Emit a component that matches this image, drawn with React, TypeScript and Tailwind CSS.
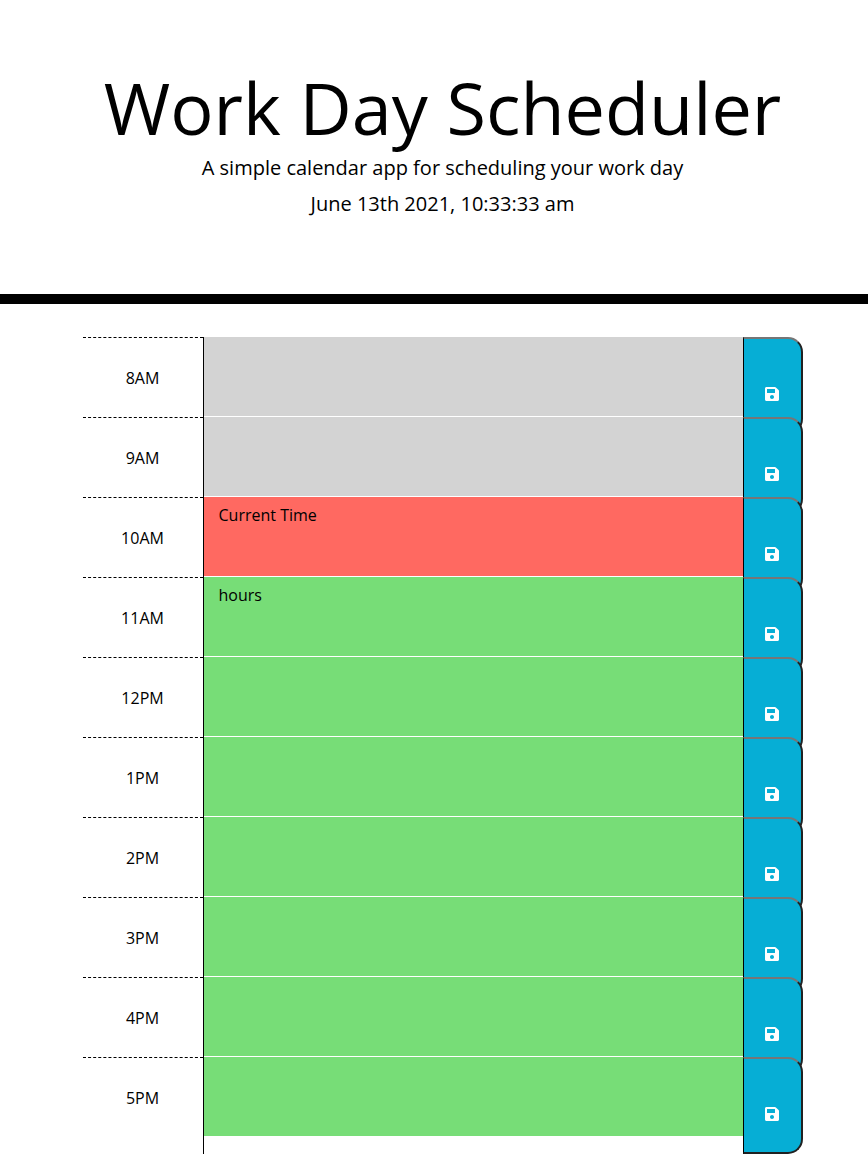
import { FaSave } from "react-icons/fa";

type Status = "past" | "present" | "future";

const blocks: { hour: string; status: Status; text: string }[] = [
  { hour: "8AM", status: "past", text: "" },
  { hour: "9AM", status: "past", text: "" },
  { hour: "10AM", status: "present", text: "Current Time" },
  { hour: "11AM", status: "future", text: "hours" },
  { hour: "12PM", status: "future", text: "" },
  { hour: "1PM", status: "future", text: "" },
  { hour: "2PM", status: "future", text: "" },
  { hour: "3PM", status: "future", text: "" },
  { hour: "4PM", status: "future", text: "" },
  { hour: "5PM", status: "future", text: "" },
];

const statusColor: Record<Status, string> = {
  past: "bg-[#d3d3d3]",
  present: "bg-[#ff6961]",
  future: "bg-[#77dd77]",
};

function TimeBlock({ hour, status, text }: { hour: string; status: Status; text: string }) {
  return (
    <div className="flex h-20 w-[720px]">
      <div className="w-[120px] border-t border-dashed border-black pt-7 pr-px text-center text-base leading-6">
        {hour}
      </div>
      <div className="h-[97px] w-[541px] shrink-0 border-x border-black">
        <div className={`h-[79px] px-[14.5px] pt-1.5 text-base leading-6 text-black ${statusColor[status]}`}>
          {text}
        </div>
      </div>
      <button
        aria-label={`Save ${hour}`}
        className="relative -ml-px flex h-[97px] w-[60px] shrink-0 justify-center rounded-r-[15px] border-2 border-l border-t-[#767676] border-r-[#212121] border-b-[#212121] border-l-black bg-[#06aed5] pt-[47px] pr-[1px] text-white"
      >
        <FaSave className="h-4 w-3.5" />
      </button>
    </div>
  );
}

export default function App() {
  return (
    <div className="h-[1157px] w-full overflow-hidden bg-white font-['Open_Sans',sans-serif] text-black">
      <header className="h-[304px] border-b-[10px] border-black pt-16">
        <div className="ml-[83px] w-[719px] text-center">
          <h1 className="mb-[3px] text-[72px] leading-[86px] whitespace-nowrap">Work Day Scheduler</h1>
          <p className="mb-1.5 text-xl leading-[30px]">A simple calendar app for scheduling your work day</p>
          <p className="text-xl leading-[30px]">June 13th 2021, 10:33:33 am</p>
        </div>
      </header>
      <main className="mt-[33px] ml-[83px] w-[720px]">
        {blocks.map((block) => (
          <TimeBlock key={block.hour} {...block} />
        ))}
      </main>
    </div>
  );
}
